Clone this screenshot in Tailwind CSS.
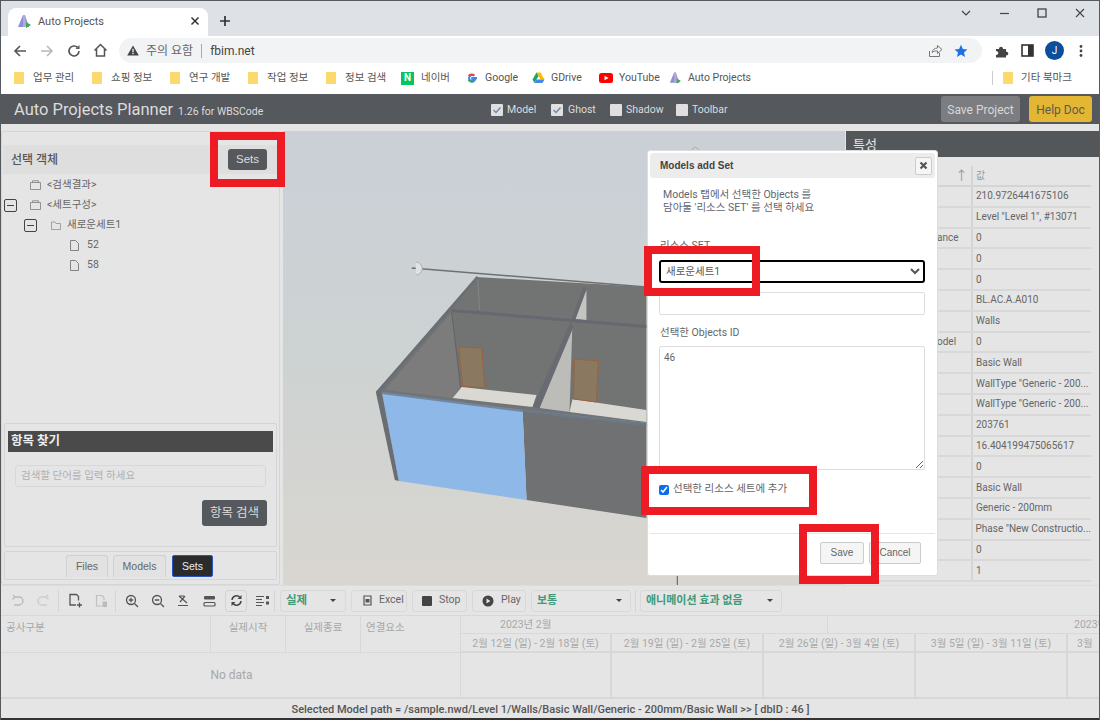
<!DOCTYPE html>
<html lang="ko">
<head>
<meta charset="utf-8">
<title>Auto Projects</title>
<script src="https://cdn.jsdelivr.net/npm/@tailwindcss/browser@4"></script>
</head>
<body class="m-0">
<div class="relative w-[1100px] h-[720px] overflow-hidden flex flex-col bg-[#e5e5e5] text-[#555] font-['Roboto','Noto_Sans_CJK_KR',sans-serif] border-x border-t border-[#555a5e]">

  <!-- title strip -->
  <div class="h-[35px] shrink-0 bg-[#dee1e6] flex items-end pl-[7px] relative">
    <div class="w-[200px] h-[28px] bg-white rounded-t-[8px] flex items-center pl-[9px] pr-[8px] pb-[2px]">
      <svg width="14" height="15" viewBox="0 0 14 15" class="shrink-0"><path d="M1 13 L6 1 L8 1 L12 13 Z" fill="#8d8fd8"/><path d="M6 1 L8 1 L10 13 L6 13Z" fill="#b3a9d8"/><path d="M9 8 L14 11 L9 14Z" fill="#3ea84a"/></svg>
      <span class="ml-[7px] text-[11px] text-[#555] leading-none">Auto Projects</span>
      <svg width="10" height="10" viewBox="0 0 10 10" class="ml-auto"><path d="M1.5 1.5 L8.5 8.5 M8.5 1.5 L1.5 8.5" stroke="#333" stroke-width="1.5"/></svg>
    </div>
    <svg width="12" height="12" viewBox="0 0 12 12" class="ml-[11px] mb-[9px]"><path d="M6 1 V11 M1 6 H11" stroke="#333" stroke-width="1.7"/></svg>
    <div class="absolute right-0 top-[6px] flex items-center">
      <svg width="38" height="12" viewBox="0 0 38 12"><path d="M15 4 L19 8 L23 4" fill="none" stroke="#444" stroke-width="1.2"/></svg>
      <svg width="38" height="12" viewBox="0 0 38 12"><path d="M15 6.5 H24" stroke="#444" stroke-width="1.2"/></svg>
      <svg width="38" height="12" viewBox="0 0 38 12"><rect x="15" y="2" width="8" height="8" fill="none" stroke="#444" stroke-width="1.3"/></svg>
      <svg width="38" height="12" viewBox="0 0 38 12"><path d="M15 2 L23 10 M23 2 L15 10" stroke="#444" stroke-width="1.1"/></svg>
    </div>
  </div>

  <!-- address row -->
  <div class="h-[29px] shrink-0 bg-white flex items-center pl-[11px] pr-[13px]">
    <svg width="16" height="14" viewBox="0 0 16 14"><path d="M14 7 H3 M8 2 L3 7 L8 12" fill="none" stroke="#555" stroke-width="1.6"/></svg>
    <svg width="16" height="14" viewBox="0 0 16 14" class="ml-[11px]"><path d="M2 7 H13 M8 2 L13 7 L8 12" fill="none" stroke="#b8b8b8" stroke-width="1.6"/></svg>
    <svg width="14" height="14" viewBox="0 0 14 14" class="ml-[12px]"><path d="M12 7 A5 5 0 1 1 10.5 3.4" fill="none" stroke="#555" stroke-width="1.6"/><path d="M12.5 1 V5 H8.5Z" fill="#555"/></svg>
    <svg width="15" height="15" viewBox="0 0 15 15" class="ml-[12px]"><path d="M1.5 7.5 L7.5 1.5 L13.5 7.5 M3.5 6 V13 H11.5 V6" fill="none" stroke="#555" stroke-width="1.5"/></svg>
    <div class="ml-[11px] w-[863px] h-[25px] bg-[#f1f3f4] rounded-full flex items-center pl-[8px] pr-[8px] text-[#555]">
      <svg width="12" height="11" viewBox="0 0 12 11"><path d="M6 0.5 L11.8 10.5 H0.2Z" fill="#444"/><rect x="5.4" y="3.8" width="1.2" height="3.6" fill="#fff"/><rect x="5.4" y="8" width="1.2" height="1.2" fill="#fff"/></svg>
      <span class="ml-[7px] text-[12px] leading-none text-[#666]">주의 요함</span>
      <span class="ml-[8px] w-px h-[14px] bg-[#aaa]"></span>
      <span class="ml-[8px] text-[12px] leading-none text-[#444]">fbim.net</span>
      <svg width="15" height="14" viewBox="0 0 15 14" class="ml-auto"><path d="M1.5 7 V12.5 H11.5 V9 M4 8.5 C4.5 5.5 7 4 9.5 4 V1.5 L14 5.5 L9.5 9.5 V7 C7.5 7 5.5 7 4 8.5Z" fill="none" stroke="#777" stroke-width="1"/></svg>
      <svg width="14" height="14" viewBox="0 0 14 14" class="ml-[11px] mr-[6px]"><path d="M7 0.8 L8.9 5 L13.4 5.4 L10 8.4 L11 12.9 L7 10.5 L3 12.9 L4 8.4 L0.6 5.4 L5.1 5Z" fill="#1a73e8"/></svg>
    </div>
    <svg width="14" height="14" viewBox="0 0 14 14" class="ml-[13px]"><path d="M1 5 H4 C4 2 8 2 8 5 H11 V7.5 C14 7.5 14 11.5 11 11.5 V13.5 H1 V11 C4 11 4 7 1 7Z" fill="#444"/></svg>
    <svg width="13" height="13" viewBox="0 0 13 13" class="ml-[12px]"><rect x="1" y="1" width="11" height="11" fill="none" stroke="#333" stroke-width="1.6"/><rect x="7" y="1" width="5" height="11" fill="#333"/></svg>
    <div class="ml-[11px] w-[19px] h-[19px] rounded-full bg-[#0b4f9c] text-white text-[10px] leading-none flex items-center justify-center">J</div>
    <svg width="4" height="14" viewBox="0 0 4 14" class="ml-[15px]"><circle cx="2" cy="2.5" r="1.4" fill="#444"/><circle cx="2" cy="7" r="1.4" fill="#444"/><circle cx="2" cy="11.5" r="1.4" fill="#444"/></svg>
  </div>

  <!-- bookmarks -->
  <div class="h-[29px] shrink-0 bg-white flex items-center pb-[3px] pl-[13px] text-[10.5px] text-[#555] leading-none">
    <div class="w-[78px] flex items-center gap-[9px]"><span class="w-[10px] h-[12px] bg-[#fbd96d] rounded-[1px]"></span><span>업무 관리</span></div>
    <div class="w-[78px] flex items-center gap-[9px]"><span class="w-[10px] h-[12px] bg-[#fbd96d] rounded-[1px]"></span><span>쇼핑 정보</span></div>
    <div class="w-[78px] flex items-center gap-[9px]"><span class="w-[10px] h-[12px] bg-[#fbd96d] rounded-[1px]"></span><span>연구 개발</span></div>
    <div class="w-[78px] flex items-center gap-[9px]"><span class="w-[10px] h-[12px] bg-[#fbd96d] rounded-[1px]"></span><span>작업 정보</span></div>
    <div class="w-[75px] flex items-center gap-[9px]"><span class="w-[10px] h-[12px] bg-[#fbd96d] rounded-[1px]"></span><span>정보 검색</span></div>
    <div class="w-[65px] flex items-center gap-[7px]"><span class="w-[13px] h-[13px] bg-[#03c75a] text-white text-[10px] font-bold flex items-center justify-center">N</span><span>네이버</span></div>
    <div class="w-[66px] flex items-center gap-[7px]"><svg width="12" height="12" viewBox="0 0 12 12"><path d="M11 6 H6.2 V7.8 H9 A3.2 3.2 0 1 1 8.2 3.6" fill="none" stroke="#4285f4" stroke-width="2"/><path d="M2.8 4 A3.4 3.4 0 0 1 8.2 3.6" fill="none" stroke="#ea4335" stroke-width="2"/><path d="M2.6 7.6 A3.6 3.6 0 0 0 8 9" fill="none" stroke="#34a853" stroke-width="2"/></svg><span>Google</span></div>
    <div class="w-[67px] flex items-center gap-[6px]"><svg width="13" height="12" viewBox="0 0 13 12"><path d="M4.5 0.5 H8.5 L12.5 7.5 H8.5Z" fill="#fbbc04"/><path d="M4.5 0.5 L0.5 7.5 L2.5 11 L6.5 4Z" fill="#1fa463"/><path d="M2.5 11 H10.5 L12.5 7.5 H4.5Z" fill="#4285f4"/></svg><span>GDrive</span></div>
    <div class="w-[70px] flex items-center gap-[6px]"><svg width="14" height="10" viewBox="0 0 14 10"><rect width="14" height="10" rx="2.5" fill="#f00"/><path d="M5.5 2.8 L9.5 5 L5.5 7.2Z" fill="#fff"/></svg><span>YouTube</span></div>
    <div class="w-[323px] flex items-center gap-[7px]"><svg width="12" height="14" viewBox="0 0 14 15"><path d="M1 13 L6 1 L8 1 L12 13 Z" fill="#8d8fd8"/><path d="M6 1 L8 1 L10 13 L6 13Z" fill="#b3a9d8"/><path d="M9 8 L14 11 L9 14Z" fill="#3ea84a"/></svg><span>Auto Projects</span></div>
    <span class="w-px h-[14px] bg-[#ccc]"></span>
    <span class="ml-[10px] w-[10px] h-[12px] bg-[#fbd96d] rounded-[1px]"></span>
    <span class="ml-[8px]">기타 북마크</span>
  </div>

  <!-- app header -->
  <div class="h-[30px] shrink-0 bg-[#55585c] flex items-center pl-[13px] pt-[2px] text-[#dcdcdc] relative">
    <div class="w-[477px] flex items-baseline">
      <span class="text-[16.5px] leading-none">Auto Projects Planner</span>
      <span class="ml-[5px] text-[10.5px] leading-none">1.26 for WBSCode</span>
    </div>
    <div class="flex items-center text-[10.5px] leading-none">
      <span class="w-[12px] h-[12px] bg-[#e0e0e0] rounded-[1px] flex items-center justify-center"><svg width="10" height="10" viewBox="0 0 10 10"><path d="M1.5 5 L4 7.5 L8.5 2.5" fill="none" stroke="#6a8aa8" stroke-width="1.4"/></svg></span>
      <span class="ml-[4px] w-[44px]">Model</span>
      <span class="w-[12px] h-[12px] bg-[#e0e0e0] rounded-[1px] flex items-center justify-center"><svg width="10" height="10" viewBox="0 0 10 10"><path d="M1.5 5 L4 7.5 L8.5 2.5" fill="none" stroke="#6a8aa8" stroke-width="1.4"/></svg></span>
      <span class="ml-[5px] w-[42px]">Ghost</span>
      <span class="w-[12px] h-[12px] bg-[#e0e0e0] rounded-[1px]"></span>
      <span class="ml-[4px] w-[50px]">Shadow</span>
      <span class="w-[12px] h-[12px] bg-[#e0e0e0] rounded-[1px]"></span>
      <span class="ml-[4px]">Toolbar</span>
    </div>
    <div class="absolute right-[7px] top-[2px] flex gap-[9px] text-[12px] leading-none">
      <div class="w-[79px] h-[26px] pt-[1px] rounded-[3px] bg-[#7b7d81] flex items-center justify-center text-[#d8d8d8]">Save Project</div>
      <div class="w-[63px] h-[26px] pt-[1px] rounded-[3px] bg-[#e3b633] flex items-center justify-center text-[#5b5b50]">Help Doc</div>
    </div>
  </div>

  <!-- main -->
  <div class="h-[461px] shrink-0 flex">
    <!-- left -->
    <div class="w-[282px] shrink-0 pt-[7px] pr-[3px] flex flex-col">
      <div class="flex-1 border border-[#d5d5d5] rounded-[2px] flex flex-col relative">
        <div class="mt-[13px] h-[29px] bg-[#dedede] flex items-center pl-[8px] mx-[1px]">
          <span class="text-[12px] font-medium text-[#555] leading-none">선택 객체</span>
          <span class="ml-auto mr-[11px] w-[39px] h-[21px] bg-[#55585c] rounded-[3px] text-[#dcdcdc] text-[11.5px] leading-none flex items-center justify-center font-['Liberation_Sans',sans-serif]">Sets</span>
        </div>
        <div class="mt-[1px] text-[10.5px] leading-none text-[#666]">
          <div class="h-[20px] flex items-center pl-[28px]"><svg width="11" height="10" viewBox="0 0 11 10"><path d="M0.5 2.5 H10.5 V9.5 H0.5Z M2.5 2.5 V0.8 H8.5 V2.5" fill="none" stroke="#888" stroke-width="0.9"/></svg><span class="ml-[6px]">&lt;검색결과&gt;</span></div>
          <div class="h-[20px] flex items-center pl-[2px]"><span class="w-[13px] h-[13px] border border-[#444] rounded-[2px] flex items-center justify-center"><span class="w-[7px] h-px bg-[#444]"></span></span><svg width="11" height="10" viewBox="0 0 11 10" class="ml-[13px]"><path d="M0.5 2.5 H10.5 V9.5 H0.5Z M2.5 2.5 V0.8 H8.5 V2.5" fill="none" stroke="#888" stroke-width="0.9"/></svg><span class="ml-[6px]">&lt;세트구성&gt;</span></div>
          <div class="h-[20px] flex items-center pl-[22px]"><span class="w-[13px] h-[13px] border border-[#444] rounded-[2px] flex items-center justify-center"><span class="w-[7px] h-px bg-[#444]"></span></span><svg width="10" height="9" viewBox="0 0 10 9" class="ml-[14px]"><path d="M0.5 1 H4 L5 2.5 H9.5 V8.5 H0.5Z" fill="none" stroke="#999" stroke-width="0.9"/></svg><span class="ml-[6px]">새로운세트1</span></div>
          <div class="h-[20px] flex items-center pl-[68px]"><svg width="9" height="11" viewBox="0 0 9 11"><path d="M0.5 0.5 H5.5 L8.5 3.5 V10.5 H0.5Z" fill="none" stroke="#777" stroke-width="0.9"/></svg><span class="ml-[8px]">52</span></div>
          <div class="h-[20px] flex items-center pl-[68px]"><svg width="9" height="11" viewBox="0 0 9 11"><path d="M0.5 0.5 H5.5 L8.5 3.5 V10.5 H0.5Z" fill="none" stroke="#777" stroke-width="0.9"/></svg><span class="ml-[8px]">58</span></div>
        </div>
        <div class="mt-auto mb-[4px] mx-[2px] h-[124px] border border-[#d5d5d5] rounded-[2px] p-[3px] flex flex-col">
          <div class="mt-[4px] h-[21px] bg-[#4a4a4a] text-[#eee] text-[12.5px] font-semibold leading-none flex items-center pl-[3px]">항목 찾기</div>
          <div class="mt-[13px] mx-[7px] h-[22px] border border-[#d8d8d8] rounded-[3px] text-[10.5px] leading-none text-[#b0b0b0] flex items-center pl-[5px]">검색할 단어를 입력 하세요</div>
          <div class="mt-[13px] mr-[6px] self-end w-[65px] h-[26px] bg-[#55585c] rounded-[3px] text-[#dcdcdc] text-[12.5px] leading-none flex items-center justify-center">항목 검색</div>
        </div>
        <div class="mb-[4px] mx-[2px] h-[29px] border border-[#d5d5d5] rounded-[2px] flex items-end pl-[61px] gap-[5px] pb-[2px] text-[10.5px] leading-none font-['Liberation_Sans',sans-serif]">
          <span class="w-[42px] h-[22px] bg-[#e2e2e2] border border-[#d0d0d0] border-b-0 rounded-t-[3px] flex items-center justify-center text-[#666]">Files</span>
          <span class="w-[53px] h-[22px] bg-[#e2e2e2] border border-[#d0d0d0] border-b-0 rounded-t-[3px] flex items-center justify-center text-[#666]">Models</span>
          <span class="w-[41px] h-[22px] ml-[1px] bg-[#2b2b2b] border border-[#2a55c0] rounded-[2px] flex items-center justify-center text-[#eee]">Sets</span>
        </div>
      </div>
    </div>

    <!-- viewer -->
    <div class="flex-1 pt-[7px] relative">
      <div class="relative w-full h-full bg-gradient-to-b from-[#cbd0d8] via-[#cdd2d2] to-[#d9d6d0]">
        <svg class="absolute inset-0 w-full h-full" viewBox="283 131 563 454" preserveAspectRatio="none">
          <polygon points="376,392 477,277 647,287 647,423 523,410" fill="#727373"/>
          <polygon points="385,390 452,312 460,387 453,398" fill="#7b7c7b"/>
          <line x1="452" y1="312" x2="461" y2="387" stroke="#606264" stroke-width="1"/>
          <polygon points="462,387 537,395 533,407 453,398" fill="#dad8d3"/>
          <polygon points="573,399 647,410 647,422 570,412" fill="#dad8d3"/>
          <polygon points="573,323 570,412 540,408" fill="#bcbcb8"/>
          <polygon points="576,319 587,290 587,320" fill="#c4c4c0"/>
          <polygon points="572,320 574,327 540,408 533,407" fill="#686b72"/>
          <polygon points="584,287 587,288 576,319 572,319" fill="#686b72"/>
          <polygon points="452,309 647,325 647,328 452,312" fill="#65686e"/>
          <polygon points="376,392 477,276 479,278 380,392" fill="#6b6e74"/>
          <line x1="478" y1="279" x2="480" y2="310" stroke="#8a8a8a" stroke-width="0.7"/>
          <polygon points="459,347 482,348 485,388 463,386" fill="#8b7861" stroke="#9a6440" stroke-width="1.1"/>
          <polygon points="575,359 599,361 597,402 574,399" fill="#8b7861" stroke="#9a6440" stroke-width="1.1"/>
          <polygon points="523,410 527,500 647,518 647,423" fill="#6f7172"/>
          <polygon points="382,392 399,481 527,500 523,410" fill="#8db8e8"/>
          <polygon points="376,392 382,392 399,481 395,480" fill="#6a6d72"/>
          <polygon points="382,391 523,409 647,423 647,426 523,412 382,394" fill="#6c7a8c" opacity="0.8"/>
          <line x1="412" y1="268" x2="647" y2="287" stroke="#6e7172" stroke-width="1.6"/>
          <path d="M416 262 A6.5 6.5 0 0 1 416 275" fill="#dfe1e3" stroke="#a8a8a8" stroke-width="0.8"/>
          <line x1="678" y1="566" x2="678" y2="585" stroke="#555" stroke-width="1"/>
          <path d="M692 150 L696 147 L700 150" fill="none" stroke="#aaa" stroke-width="1"/>
        </svg>
      </div>
    </div>

    <!-- properties -->
    <div class="w-[254px] shrink-0 pt-[7px] text-[10px] leading-none text-[#666] whitespace-nowrap">
      <div class="ml-[1px] h-[26px] bg-[#54575a] text-[#e8e8e8] text-[13px] flex items-center pl-[7px]">특성</div>
      <div class="mt-[9px] mr-[8px] flex h-[21px] border-b-2 border-[#d4d4d4] items-center text-[#999]"><span class="w-[126px] text-right pr-[3px] text-[13px]">↑</span><span class="pl-[3px] border-l-2 border-[#d4d4d4] h-full flex items-center">값</span></div>
      <div class="mr-[8px]">
        <div class="flex h-[20.8px] border-b-2 border-[#d8d8d8] items-center"><span class="w-[126px]"></span><span class="pl-[3px] border-l-2 border-[#d4d4d4] h-full flex items-center">210.9726441675106</span></div>
        <div class="flex h-[20.8px] border-b-2 border-[#d8d8d8] items-center"><span class="w-[126px]"></span><span class="pl-[3px] border-l-2 border-[#d4d4d4] h-full flex items-center">Level "Level 1", #13071</span></div>
        <div class="flex h-[20.8px] border-b-2 border-[#d8d8d8] items-center"><span class="w-[126px] pl-[92px]">ance</span><span class="pl-[3px] border-l-2 border-[#d4d4d4] h-full flex items-center">0</span></div>
        <div class="flex h-[20.8px] border-b-2 border-[#d8d8d8] items-center"><span class="w-[126px]"></span><span class="pl-[3px] border-l-2 border-[#d4d4d4] h-full flex items-center">0</span></div>
        <div class="flex h-[20.8px] border-b-2 border-[#d8d8d8] items-center"><span class="w-[126px]"></span><span class="pl-[3px] border-l-2 border-[#d4d4d4] h-full flex items-center">0</span></div>
        <div class="flex h-[20.8px] border-b-2 border-[#d8d8d8] items-center"><span class="w-[126px]"></span><span class="pl-[3px] border-l-2 border-[#d4d4d4] h-full flex items-center">BL.AC.A.A010</span></div>
        <div class="flex h-[20.8px] border-b-2 border-[#d8d8d8] items-center"><span class="w-[126px]"></span><span class="pl-[3px] border-l-2 border-[#d4d4d4] h-full flex items-center">Walls</span></div>
        <div class="flex h-[20.8px] border-b-2 border-[#d8d8d8] items-center"><span class="w-[126px] pl-[92px]">odel</span><span class="pl-[3px] border-l-2 border-[#d4d4d4] h-full flex items-center">0</span></div>
        <div class="flex h-[20.8px] border-b-2 border-[#d8d8d8] items-center"><span class="w-[126px]"></span><span class="pl-[3px] border-l-2 border-[#d4d4d4] h-full flex items-center">Basic Wall</span></div>
        <div class="flex h-[20.8px] border-b-2 border-[#d8d8d8] items-center"><span class="w-[126px]"></span><span class="pl-[3px] border-l-2 border-[#d4d4d4] h-full flex items-center">WallType "Generic - 200...</span></div>
        <div class="flex h-[20.8px] border-b-2 border-[#d8d8d8] items-center"><span class="w-[126px]"></span><span class="pl-[3px] border-l-2 border-[#d4d4d4] h-full flex items-center">WallType "Generic - 200...</span></div>
        <div class="flex h-[20.8px] border-b-2 border-[#d8d8d8] items-center"><span class="w-[126px]"></span><span class="pl-[3px] border-l-2 border-[#d4d4d4] h-full flex items-center">203761</span></div>
        <div class="flex h-[20.8px] border-b-2 border-[#d8d8d8] items-center"><span class="w-[126px]"></span><span class="pl-[3px] border-l-2 border-[#d4d4d4] h-full flex items-center">16.404199475065617</span></div>
        <div class="flex h-[20.8px] border-b-2 border-[#d8d8d8] items-center"><span class="w-[126px]"></span><span class="pl-[3px] border-l-2 border-[#d4d4d4] h-full flex items-center">0</span></div>
        <div class="flex h-[20.8px] border-b-2 border-[#d8d8d8] items-center"><span class="w-[126px]"></span><span class="pl-[3px] border-l-2 border-[#d4d4d4] h-full flex items-center">Basic Wall</span></div>
        <div class="flex h-[20.8px] border-b-2 border-[#d8d8d8] items-center"><span class="w-[126px]"></span><span class="pl-[3px] border-l-2 border-[#d4d4d4] h-full flex items-center">Generic - 200mm</span></div>
        <div class="flex h-[20.8px] border-b-2 border-[#d8d8d8] items-center"><span class="w-[126px]"></span><span class="pl-[3px] border-l-2 border-[#d4d4d4] h-full flex items-center">Phase "New Constructio...</span></div>
        <div class="flex h-[20.8px] border-b-2 border-[#d8d8d8] items-center"><span class="w-[126px]"></span><span class="pl-[3px] border-l-2 border-[#d4d4d4] h-full flex items-center">0</span></div>
        <div class="flex h-[20.8px] border-b-2 border-[#d8d8d8] items-center"><span class="w-[126px]"></span><span class="pl-[3px] border-l-2 border-[#d4d4d4] h-full flex items-center">1</span></div>
      </div>
    </div>
  </div>

  <!-- toolbar -->
  <div class="h-[30px] shrink-0 flex items-center text-[10.5px] leading-none text-[#666] border-t border-[#dcdcdc]">
    <div class="w-[57px] pl-[9px] flex items-center gap-[13px]">
      <svg width="14" height="14" viewBox="0 0 14 14"><path d="M5 3 H9 A3.5 3.5 0 0 1 9 11 H4 M5 3 L2.5 5.5 M5 3 L3 1" fill="none" stroke="#bbb" stroke-width="1.4"/></svg>
      <svg width="14" height="14" viewBox="0 0 14 14"><path d="M9 3 H5 A3.5 3.5 0 0 0 5 11 H10 M9 3 L11.5 5.5 M9 3 L11 1" fill="none" stroke="#ccc" stroke-width="1.4"/></svg>
    </div>
    <span class="w-px h-[22px] bg-[#d4d4d4]"></span>
    <div class="w-[56px] pl-[9px] flex items-center gap-[13px]">
      <svg width="14" height="15" viewBox="0 0 14 15"><path d="M8 12 H2 V1.5 H8.5 L10.5 3.5 V7.5 M9 12 H14 M11.5 9.5 V14.5" fill="none" stroke="#555" stroke-width="1.3"/></svg>
      <svg width="13" height="14" viewBox="0 0 13 14"><path d="M7 12 H1.5 V1.5 H7 L9 3.5 V6" fill="none" stroke="#c0c0c0" stroke-width="1.2"/><rect x="7.5" y="7.5" width="4.5" height="5.5" fill="#bbb"/></svg>
    </div>
    <span class="w-px h-[22px] bg-[#d4d4d4]"></span>
    <div class="w-[158px] pl-[9px] flex items-center">
      <svg width="14" height="14" viewBox="0 0 14 14" class="mr-[12px]"><circle cx="6" cy="6" r="4.5" fill="none" stroke="#555" stroke-width="1.3"/><path d="M9.5 9.5 L13 13 M3.8 6 H8.2 M6 3.8 V8.2" stroke="#555" stroke-width="1.3"/></svg>
      <svg width="14" height="14" viewBox="0 0 14 14" class="mr-[12px]"><circle cx="6" cy="6" r="4.5" fill="none" stroke="#555" stroke-width="1.3"/><path d="M9.5 9.5 L13 13 M3.8 6 H8.2" stroke="#555" stroke-width="1.3"/></svg>
      <svg width="12" height="13" viewBox="0 0 12 13" class="mr-[14px]"><path d="M2 2 L10 9 M1 11.5 H11 M8 2 L3 8 M2 2 H7" stroke="#555" stroke-width="1.2" fill="none"/></svg>
      <svg width="13" height="12" viewBox="0 0 13 12" class="mr-[9px]"><rect x="1" y="1" width="11" height="3.5" rx="1" fill="#555"/><rect x="1" y="7.5" width="11" height="3.5" rx="1" fill="none" stroke="#555" stroke-width="1.2"/></svg>
      <span class="w-[22px] h-[22px] border border-[#d2d2d2] rounded-[3px] flex items-center justify-center"><svg width="13" height="13" viewBox="0 0 13 13"><path d="M2 6 A4.5 4.5 0 0 1 10 3.5 M11 7 A4.5 4.5 0 0 1 3 9.5" fill="none" stroke="#444" stroke-width="1.5"/><path d="M11.5 1 V5 H7.5Z M1.5 12 V8 H5.5Z" fill="#444"/></svg></span>
      <svg width="13" height="12" viewBox="0 0 13 12" class="ml-[9px]"><path d="M0 1.5 H8 M0 4.5 H6 M0 7.5 H8 M0 10.5 H6" stroke="#555" stroke-width="1.2"/><rect x="10" y="1" width="3" height="3" fill="#555"/><rect x="10" y="6.5" width="3" height="3" fill="#555"/></svg>
    </div>
    <span class="w-px h-[22px] bg-[#d4d4d4]"></span>
    <div class="ml-[5px] w-[66px] h-[22px] border border-[#d8d8d8] rounded-[3px] flex items-center pl-[5px] text-[#3f9a7a] text-[11.5px] font-semibold">실제<span class="ml-auto mr-[9px] border-x-[3px] border-x-transparent border-t-[3px] border-t-[#444]"></span></div>
    <div class="ml-[5px] w-[56px] h-[22px] border border-[#d8d8d8] rounded-[3px] flex items-center pl-[10px]"><svg width="11" height="11" viewBox="0 0 11 11"><path d="M2 1 H9 V10 H2Z" fill="none" stroke="#555" stroke-width="1.2"/><rect x="3.5" y="4" width="4" height="3.5" fill="#555"/></svg><span class="ml-[6px]">Excel</span></div>
    <div class="ml-[5px] w-[55px] h-[22px] border border-[#d8d8d8] rounded-[3px] flex items-center pl-[9px]"><span class="w-[10px] h-[10px] bg-[#444] rounded-[1px]"></span><span class="ml-[7px]">Stop</span></div>
    <div class="ml-[5px] w-[54px] h-[22px] border border-[#d8d8d8] rounded-[3px] flex items-center pl-[9px]"><svg width="12" height="12" viewBox="0 0 12 12"><circle cx="6" cy="6" r="5.5" fill="#444"/><path d="M4.5 3.5 L8.5 6 L4.5 8.5Z" fill="#e5e5e5"/></svg><span class="ml-[7px]">Play</span></div>
    <div class="ml-[5px] w-[100px] h-[22px] border border-[#d8d8d8] rounded-[3px] flex items-center pl-[5px] text-[#3f9a7a] text-[11px] font-semibold">보통<span class="ml-auto mr-[8px] border-x-[3px] border-x-transparent border-t-[3px] border-t-[#444]"></span></div>
    <span class="ml-[4px] w-px h-[22px] bg-[#d4d4d4]"></span>
    <div class="ml-[4px] w-[142px] h-[22px] border border-[#d8d8d8] rounded-[3px] flex items-center pl-[5px] text-[#3f9a7a] text-[11px] font-semibold">애니메이션 효과 없음<span class="ml-auto mr-[8px] border-x-[3px] border-x-transparent border-t-[3px] border-t-[#444]"></span></div>
  </div>

  <!-- gantt -->
  <div class="h-[82px] shrink-0 flex border-t border-[#d8d8d8] text-[10.5px] leading-none text-[#a8a8a8]">
    <div class="w-[460px] shrink-0 flex flex-col border-r border-[#d8d8d8]">
      <div class="h-[37px] flex border-b border-[#d8d8d8]">
        <span class="w-[210px] pl-[5px] pt-[7px] border-r border-[#d8d8d8] h-[37px]">공사구분</span>
        <span class="w-[75px] text-center pt-[7px] border-r border-[#d8d8d8] h-[37px]">실제시작</span>
        <span class="w-[75px] text-center pt-[7px] border-r border-[#d8d8d8] h-[37px]">실제종료</span>
        <span class="pl-[5px] pt-[7px]">연결요소</span>
      </div>
      <div class="flex-1 flex items-center justify-center text-[12px] pl-[2px]">No data</div>
    </div>
    <div class="flex-1 overflow-hidden flex flex-col">
      <div class="h-[18px] flex border-b border-[#d8d8d8] items-center pt-[1px]">
        <span class="w-[367px] shrink-0 pl-[39px] border-r border-[#d8d8d8] h-full flex items-center">2023년 2월</span>
        <span class="whitespace-nowrap pl-[246px]">2023년 3월</span>
      </div>
      <div class="h-[19px] flex border-b-2 border-[#d8d8d8] items-center text-center whitespace-nowrap">
        <span class="w-[151px] shrink-0 pt-[3px] border-r-2 border-[#d8d8d8] h-full flex items-center justify-center">2월 12일 (일) - 2월 18일 (토)</span>
        <span class="w-[152px] shrink-0 pt-[3px] border-r-2 border-[#d8d8d8] h-full flex items-center justify-center">2월 19일 (일) - 2월 25일 (토)</span>
        <span class="w-[152px] shrink-0 pt-[3px] border-r-2 border-[#d8d8d8] h-full flex items-center justify-center">2월 26일 (일) - 3월 4일 (토)</span>
        <span class="w-[152px] shrink-0 pt-[3px] border-r-2 border-[#d8d8d8] h-full flex items-center justify-center">3월 5일 (일) - 3월 11일 (토)</span>
        <span class="pl-[9px] pt-[3px]">3월</span>
      </div>
      <div class="flex-1 flex">
        <span class="w-[151px] shrink-0 border-r-2 border-[#d8d8d8]"></span>
        <span class="w-[152px] shrink-0 border-r-2 border-[#d8d8d8]"></span>
        <span class="w-[152px] shrink-0 border-r-2 border-[#d8d8d8]"></span>
        <span class="w-[152px] shrink-0 border-r-2 border-[#d8d8d8]"></span>
      </div>
    </div>
  </div>

  <!-- status -->
  <div class="flex-1 border-t-2 border-[#d8d8d8] border-b-2 border-b-[#333] flex items-center justify-center text-[11px] font-medium leading-none text-[#555] pl-[1px] pt-[1px]">Selected Model path = /sample.nwd/Level 1/Walls/Basic Wall/Generic - 200mm/Basic Wall &gt;&gt; [ dbID : 46 ]</div>

  <!-- modal -->
  <div class="absolute left-[646px] top-[149px] w-[291px] h-[426px] bg-white rounded-[3px] border border-[#ddd] p-[2px] flex flex-col text-[10.5px] leading-none text-[#666]">
    <div class="h-[25px] shrink-0 bg-[#ececec] rounded-[3px] flex items-center pl-[10px] pr-[3px]">
      <span class="font-bold text-[10px] text-[#444] font-['Liberation_Sans',sans-serif]">Models add Set</span>
      <span class="ml-auto w-[17px] h-[18px] bg-[#f6f6f6] border border-[#ccc] rounded-[2px] flex items-center justify-center"><svg width="9" height="9" viewBox="0 0 9 9"><path d="M1.5 1.5 L7.5 7.5 M7.5 1.5 L1.5 7.5" stroke="#555" stroke-width="2.2"/></svg></span>
    </div>
    <div class="mt-[10px] pl-[13px] text-[10.5px] leading-[13px] text-[#5f6670]">Models 탭에서 선택한 Objects 를<br>담아둘 '리소스 SET' 를 선택 하세요</div>
    <div class="mt-[25px] pl-[10px] leading-[13px]">리소스 SET</div>
    <div class="ml-[9px] mt-[8px]">
      <select class="block w-[266px] h-[23px] border-2 border-black rounded-[3px] bg-white text-[10.5px] pl-[1px] text-[#555] outline-none"><option>새로운세트1</option></select>
    </div>
    <div class="ml-[9px] mt-[9px] w-[266px] h-[23px] border border-[#ddd] rounded-[2px]"></div>
    <div class="mt-[11px] pl-[10px] text-[10.5px] leading-[13px]">선택한 Objects ID</div>
    <textarea class="block ml-[9px] mt-[7px] w-[266px] h-[124px] shrink-0 border border-[#ddd] rounded-[2px] p-[4px] text-[10px] leading-[14px] text-[#666] outline-none" readonly>46</textarea>
    <label class="mt-[14px] h-[11px] pl-[9px] flex items-center text-[10.5px]"><input type="checkbox" checked class="w-[10px] h-[10px] m-0 accent-[#0a6cf0]"><span class="ml-[4px]">선택한 리소스 세트에 추가</span></label>
    <div class="mt-[38px] border-t border-[#e5e5e5] h-[1px] shrink-0"></div>
    <div class="mt-[8px] flex justify-end pr-[14px] gap-[5px] text-[10px] font-['Liberation_Sans',sans-serif]">
      <span class="w-[44px] h-[22px] bg-[#f5f5f5] border border-[#ccc] rounded-[2px] flex items-center justify-center">Save</span>
      <span class="w-[52px] h-[22px] bg-[#f5f5f5] border border-[#ccc] rounded-[2px] flex items-center justify-center">Cancel</span>
    </div>
  </div>

  <!-- red annotation boxes -->
  <div class="absolute left-[209px] top-[131px] w-[75px] h-[55px] border-[8px] border-[#ed1c24]"></div>
  <div class="absolute left-[643px] top-[245px] w-[116px] h-[50px] border-[8px] border-[#ed1c24]"></div>
  <div class="absolute left-[640px] top-[465px] w-[176px] h-[49px] border-[8px] border-[#ed1c24]"></div>
  <div class="absolute left-[798px] top-[523px] w-[80px] h-[60px] border-[8px] border-[#ed1c24]"></div>
</div>
</body>
</html>
